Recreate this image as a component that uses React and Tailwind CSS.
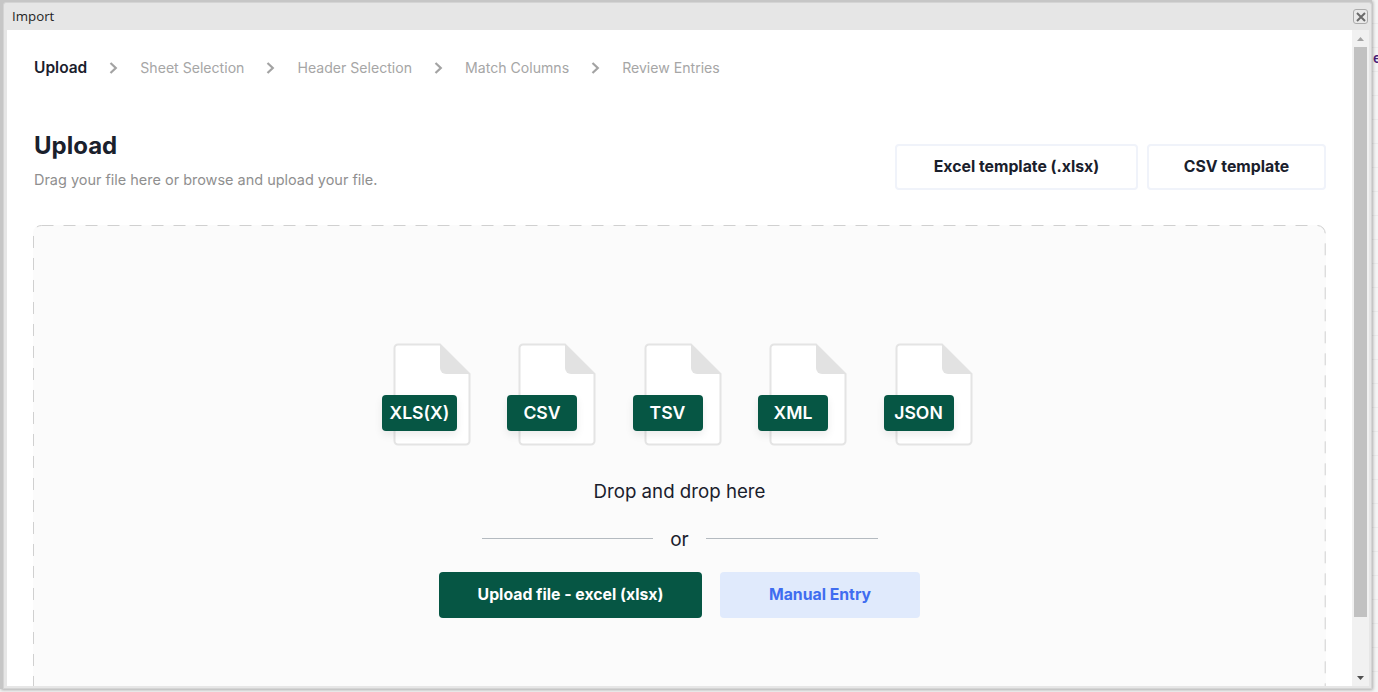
import React from "react";

const FileBadge = ({ label }) => (
  <div className="relative w-[90px] h-[104px] shrink-0">
    <svg className="absolute left-[11px] top-0" width="78" height="104" viewBox="0 0 78 104" fill="none">
      <path d="M5 1.500H47L76.500 31V98a3.500 3.500 0 0 1-3.500 3.500H5A3.500 3.500 0 0 1 1.500 98V5A3.500 3.500 0 0 1 5 1.500Z" fill="#ffffff" stroke="#e4e4e4" strokeWidth="2" />
      <path d="M47 1L77 31H53a6 6 0 0 1-6-6V1Z" fill="#e2e2e2" />
    </svg>
    <div className="absolute left-0 top-[52px] h-9 min-w-[70px] px-2 pt-px flex items-center justify-center rounded-[4px] bg-[#065644] text-white text-[17.600px] font-semibold shadow-[0_4px_8px_rgba(0,0,0,0.08)]">
      {label}
    </div>
  </div>
);

const Step = ({ children, active }) => (
  <span className={active ? "text-[15.500px] font-semibold text-[#1a202c]" : "text-[14.100px] text-[#a6a6a6]"}>{children}</span>
);

const Chevron = () => (
  <svg width="9" height="12" viewBox="0 0 9 12" fill="none" className="block shrink-0">
    <path d="M1.500 1L6.800 6L1.500 11" stroke="#a3a3a3" strokeWidth="2.200" />
  </svg>
);

export default function App() {
  return (
    <div className="relative h-[692px] w-[1378px] overflow-hidden bg-[#f4f4f4] bg-[repeating-linear-gradient(to_bottom,#f4f4f4_0,#f4f4f4_23px,#ebebeb_23px,#ebebeb_24px)] font-['Inter',sans-serif]">
      <span className="absolute left-[1373px] top-[48px] text-sm font-semibold text-[#4a1d7a]">e</span>
      <div className="relative h-[689px] w-[1372px] pt-[2px] pl-[3px] bg-[#c6c6c6] shadow-[1px_1px_3px_rgba(0,0,0,0.3)]">
        <div className="h-[687px] w-[1369px] flex flex-col bg-[#e6e6e6] rounded-t-[3px] border border-[#d4d4d4]">
          <div className="h-[27px] shrink-0 flex items-center justify-between pl-[8px] pr-[3px]">
            <span className="text-[13.300px] text-[#1f1f1f] font-['Open_Sans',sans-serif]">Import</span>
            <button className="w-[15px] h-[15px] flex items-center justify-center rounded-[3px] border border-[#ababab] bg-[#e9e9e9]">
              <svg width="10" height="10" viewBox="0 0 10 10" fill="none">
                <path d="M1 1L9 9M9 1L1 9" stroke="#6a6a6a" strokeWidth="2" />
              </svg>
            </button>
          </div>
          <div className="flex-1 min-h-0 flex ml-[3px] mr-[2px] mb-[2px] overflow-hidden">
            <main className="flex-1 min-w-0 bg-white overflow-hidden px-[26px]">
              <nav className="flex items-center h-[18px] mt-[29px] pl-px">
                <Step active>Upload</Step>
                <span className="mx-[22px]"><Chevron /></span>
                <Step>Sheet Selection</Step>
                <span className="mx-[22px]"><Chevron /></span>
                <Step>Header Selection</Step>
                <span className="mx-[22px]"><Chevron /></span>
                <Step>Match Columns</Step>
                <span className="mx-[22px]"><Chevron /></span>
                <Step>Review Entries</Step>
              </nav>
              <div className="flex items-start justify-between mt-[53px]">
                <div className="pl-px">
                  <h1 className="text-2xl leading-8 font-bold text-[#1a202c]">Upload</h1>
                  <p className="mt-[8px] text-[14.460px] leading-5 text-[#8f8f8f]">Drag your file here or browse and upload your file.</p>
                </div>
                <div className="flex gap-[9px] mt-[14px]">
                  <button className="w-[243px] h-[46px] rounded-[4px] border-2 border-[#f0f3fa] bg-white text-[15.800px] font-bold text-[#1a202c]">Excel template (.xlsx)</button>
                  <button className="w-[179px] h-[46px] rounded-[4px] border-2 border-[#f0f3fa] bg-white text-[15.800px] font-bold text-[#1a202c]">CSV template</button>
                </div>
              </div>
              <section className="relative mt-[35px] h-[600px] rounded-lg bg-[#fbfbfb] pt-[118px] flex flex-col items-center">
                <svg className="absolute inset-0 w-full h-full pointer-events-none" fill="none">
                  <rect x="0.500" y="0.500" width="99.900%" height="99.800%" rx="8" stroke="#d0d0d0" strokeWidth="1" strokeDasharray="12 10" />
                </svg>
                <div className="flex gap-[35.500px] ml-[-4px]">
                  <FileBadge label="XLS(X)" />
                  <FileBadge label="CSV" />
                  <FileBadge label="TSV" />
                  <FileBadge label="XML" />
                  <FileBadge label="JSON" />
                </div>
                <p className="mt-[31px] text-[18.700px] leading-7 text-[#1a202c]">Drop and drop here</p>
                <div className="flex items-center w-[396px] mt-[20px]">
                  <div className="flex-1 h-px mb-[4px] bg-[#b4bac0]" />
                  <span className="w-[53px] text-center text-[19px] leading-7 text-[#1a202c]">or</span>
                  <div className="flex-1 h-px mb-[4px] bg-[#b4bac0]" />
                </div>
                <div className="flex gap-[18px] mt-[18px]">
                  <button className="w-[263px] h-[46px] rounded-[4px] bg-[#065644] text-white text-[15.800px] font-bold">Upload file - excel (xlsx)</button>
                  <button className="w-[200px] h-[46px] rounded-[4px] bg-[#e0eafc] text-[#3f6df0] text-[15.800px] font-bold">Manual Entry</button>
                </div>
              </section>
            </main>
            <aside className="w-[17px] shrink-0 bg-[#f1f1f1] flex flex-col items-center">
              <div className="h-[17px] flex items-center justify-center">
                <svg width="7" height="4" viewBox="0 0 7 4"><path d="M3.500 0L7 4H0Z" fill="#a3a3a3" /></svg>
              </div>
              <div className="w-[13px] h-[570px] bg-[#c1c1c1]" />
              <div className="flex-1" />
              <div className="h-[17px] flex items-center justify-center">
                <svg width="7" height="4" viewBox="0 0 7 4"><path d="M0 0H7L3.500 4Z" fill="#505050" /></svg>
              </div>
            </aside>
          </div>
        </div>
      </div>
    </div>
  );
}
